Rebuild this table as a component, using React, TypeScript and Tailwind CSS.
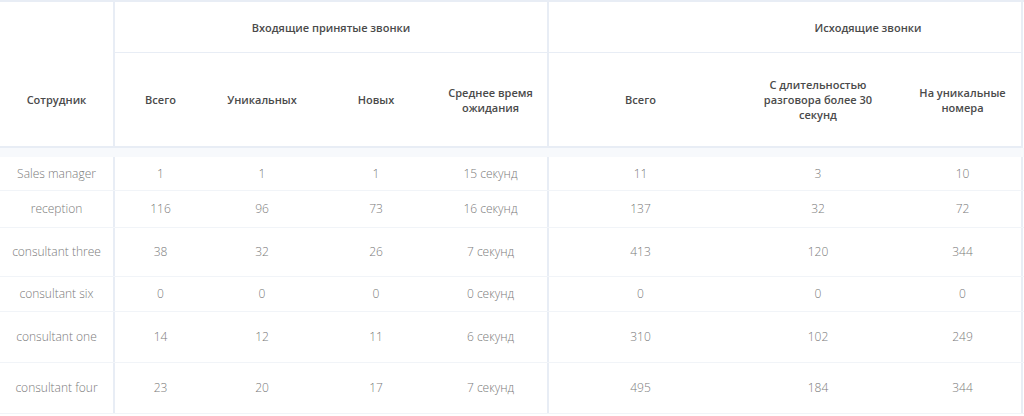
const cols = 'grid-cols-[115px_91px_112px_116px_115px_183px_172px_119px]'

type Row = {
  name: string
  h: string
  values: string[]
}

const rows: Row[] = [
  { name: 'Sales manager', h: 'h-[34px]', values: ['1', '1', '1', '15 секунд', '11', '3', '10'] },
  { name: 'reception', h: 'h-[37px]', values: ['116', '96', '73', '16 секунд', '137', '32', '72'] },
  { name: 'consultant three', h: 'h-[49px]', values: ['38', '32', '26', '7 секунд', '413', '120', '344'] },
  { name: 'consultant six', h: 'h-[35px]', values: ['0', '0', '0', '0 секунд', '0', '0', '0'] },
  { name: 'consultant one', h: 'h-[51px]', values: ['14', '12', '11', '6 секунд', '310', '102', '249'] },
  { name: 'consultant four', h: 'h-[51px]', values: ['23', '20', '17', '7 секунд', '495', '184', '344'] },
]

const subHeaders = [
  'Всего',
  'Уникальных',
  'Новых',
  'Среднее время ожидания',
  'Всего',
  'С длительностью разговора более 30 секунд',
  'На уникальные номера',
]

export default function App() {
  return (
    <div
      className="w-[1024px] h-[416px] overflow-hidden bg-white border-t-2 border-[#e8edf5]"
      style={{ fontFamily: '"Open Sans", "Noto Sans", sans-serif' }}
    >
      {/* Header */}
      <div className={`grid ${cols} grid-rows-[51px_95px] text-[11px] font-semibold text-[#4a4a4a] leading-[15px]`}>
        <div className="row-span-2 flex items-center justify-center pt-[51px] border-r-2 border-b-2 border-[#e8edf5]">
          Сотрудник
        </div>
        <div className="col-span-4 flex items-center justify-center border-r-2 border-b border-[#e8edf5]">
          Входящие принятые звонки
        </div>
        <div className="col-span-3 flex items-center pl-[166px] border-r-2 border-b border-[#e8edf5]">
          <span className="w-full text-center">Исходящие звонки</span>
        </div>
        {subHeaders.map((label, i) => (
          <div
            key={i}
            className={`flex items-center justify-center text-center px-2 border-b-2 border-[#e8edf5] ${
              i === 3 || i === 6 ? 'border-r-2' : ''
            }`}
          >
            <span className={i === 5 ? 'w-[140px]' : i === 6 ? 'w-[100px]' : i === 3 ? 'w-[100px]' : ''}>
              {label}
            </span>
          </div>
        ))}
      </div>

      {/* Spacer band */}
      <div className="h-[9px] bg-[#f7f9fc]" />

      {/* Body */}
      {rows.map((row) => (
        <div
          key={row.name}
          className={`grid ${cols} ${row.h} text-[12px] font-light text-[#7a7a7a] border-b border-[#f1f4f8]`}
        >
          <div className="flex items-center justify-center border-r-2 border-[#e8edf5] whitespace-nowrap">
            {row.name}
          </div>
          {row.values.map((v, i) => (
            <div
              key={i}
              className={`flex items-center justify-center ${
                i === 3 || i === 6 ? 'border-r-2 border-[#e8edf5]' : ''
              }`}
            >
              {v}
            </div>
          ))}
        </div>
      ))}
    </div>
  )
}
